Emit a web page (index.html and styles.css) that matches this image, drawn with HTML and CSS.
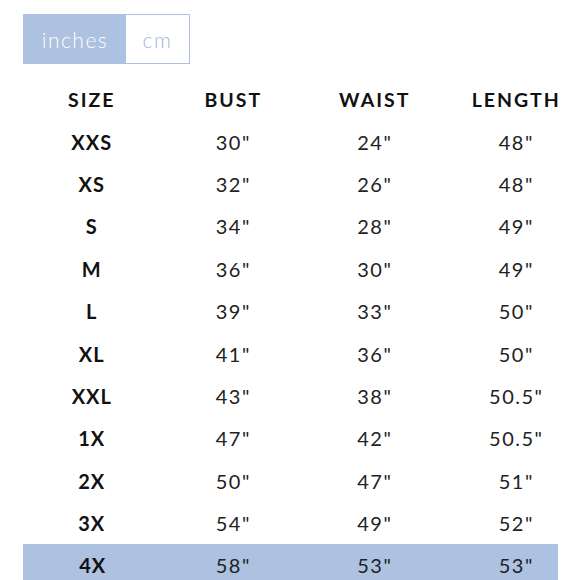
FILE: index.html
```html
<!DOCTYPE html>
<html>
<head>
<meta charset="utf-8">
<link rel="stylesheet" href="styles.css">
</head>
<body>
<div class="page">
  <div class="toggle">
    <div class="opt active">inches</div>
    <div class="opt">cm</div>
  </div>
  <div class="chart">
    <div class="row head"><span>SIZE</span><span>BUST</span><span>WAIST</span><span>LENGTH</span></div>
    <div class="row"><b>XXS</b><span>30"</span><span>24"</span><span>48"</span></div>
    <div class="row"><b>XS</b><span>32"</span><span>26"</span><span>48"</span></div>
    <div class="row"><b>S</b><span>34"</span><span>28"</span><span>49"</span></div>
    <div class="row"><b>M</b><span>36"</span><span>30"</span><span>49"</span></div>
    <div class="row"><b>L</b><span>39"</span><span>33"</span><span>50"</span></div>
    <div class="row"><b>XL</b><span>41"</span><span>36"</span><span>50"</span></div>
    <div class="row"><b>XXL</b><span>43"</span><span>38"</span><span>50.5"</span></div>
    <div class="row"><b>1X</b><span>47"</span><span>42"</span><span>50.5"</span></div>
    <div class="row"><b>2X</b><span>50"</span><span>47"</span><span>51"</span></div>
    <div class="row"><b>3X</b><span>54"</span><span>49"</span><span>52"</span></div>
    <div class="row hl"><b>4X</b><span>58"</span><span>53"</span><span>53"</span></div>
  </div>
</div>
</body>
</html>
```
FILE: styles.css
```css
html, body {
  margin: 0;
  padding: 0;
  background: #fff;
  overflow: hidden;
}
body {
  width: 580px;
  height: 580px;
  font-family: Lato, "Open Sans", sans-serif;
  color: #1a1a1a;
}
.page {
  padding-top: 14px;
}
.toggle {
  display: flex;
  margin-left: 23px;
  width: 167px;
  height: 50px;
  box-sizing: border-box;
  border: 1px solid #aec1df;
}
.opt {
  display: flex;
  align-items: center;
  justify-content: center;
  font-size: 21px;
  font-weight: 300;
  letter-spacing: 1.5px;
  color: #a3b7d8;
  flex: 1;
}
.opt.active {
  flex: 0 0 102px;
  background: #adc1e0;
  color: #fff;
}
.chart {
  margin-top: 14px;
}
.row {
  display: grid;
  grid-template-columns: repeat(4, 141.5px);
  margin-left: 21px;
  height: 42.4px;
  align-items: center;
  justify-items: center;
  font-size: 20px;
  font-weight: 400;
  letter-spacing: 1.5px;
  color: #222;
}
.row b {
  font-weight: 700;
  letter-spacing: 1px;
  color: #111;
}
.row.head span {
  font-weight: 700;
  font-size: 19.5px;
  letter-spacing: 2px;
  color: #111;
}
.row.hl {
  margin-left: 23px;
  width: 535px;
  grid-template-columns: 139.5px 141.5px 141.5px 141.5px;
  background: #adc1e0;
}
```
